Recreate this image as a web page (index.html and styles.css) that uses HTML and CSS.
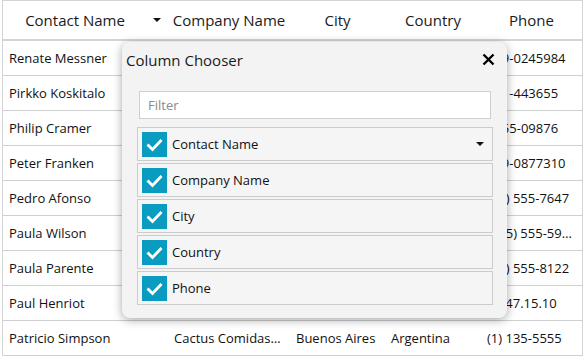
FILE: index.html
```html
<!DOCTYPE html>
<html>
  <head>
    <link rel="stylesheet" href="styles.css">
  </head>

  <body>
    <div class="grid">
      <div class="row header">
        <div class="cell head first">
          <span class="head-text">Contact Name</span>
          <span class="arrow"></span>
        </div>
        <div class="cell head">Company Name</div>
        <div class="cell head">City</div>
        <div class="cell head">Country</div>
        <div class="cell head">Phone</div>
      </div>
      <div class="row">
        <div class="cell">Renate Messner</div>
        <div class="cell">Lehmanns Marktstand</div>
        <div class="cell">Frankfurt a.M.</div>
        <div class="cell">Germany</div>
        <div class="cell">069-0245984</div>
      </div>
      <div class="row">
        <div class="cell">Pirkko Koskitalo</div>
        <div class="cell">Wartian Herkku</div>
        <div class="cell">Oulu</div>
        <div class="cell">Finland</div>
        <div class="cell">981-443655</div>
      </div>
      <div class="row">
        <div class="cell">Philip Cramer</div>
        <div class="cell">Königlich Essen</div>
        <div class="cell">Brandenburg</div>
        <div class="cell">Germany</div>
        <div class="cell">0555-09876</div>
      </div>
      <div class="row">
        <div class="cell">Peter Franken</div>
        <div class="cell">Frankenversand</div>
        <div class="cell">München</div>
        <div class="cell">Germany</div>
        <div class="cell">089-0877310</div>
      </div>
      <div class="row">
        <div class="cell">Pedro Afonso</div>
        <div class="cell">Comércio Mineiro</div>
        <div class="cell">Sao Paulo</div>
        <div class="cell">Brazil</div>
        <div class="cell">(11) 555-7647</div>
      </div>
      <div class="row">
        <div class="cell">Paula Wilson</div>
        <div class="cell">Rattlesnake Canyon Grocery</div>
        <div class="cell">Albuquerque</div>
        <div class="cell">USA</div>
        <div class="cell">(505) 555-5939</div>
      </div>
      <div class="row">
        <div class="cell">Paula Parente</div>
        <div class="cell">Wellington Importadora</div>
        <div class="cell">Resende</div>
        <div class="cell">Brazil</div>
        <div class="cell">(14) 555-8122</div>
      </div>
      <div class="row">
        <div class="cell">Paul Henriot</div>
        <div class="cell">Vins et alcools Chevalier</div>
        <div class="cell">Reims</div>
        <div class="cell">France</div>
        <div class="cell">26.47.15.10</div>
      </div>
      <div class="row">
        <div class="cell">Patricio Simpson</div>
        <div class="cell">Cactus Comidas para llevar</div>
        <div class="cell">Buenos Aires</div>
        <div class="cell">Argentina</div>
        <div class="cell">(1) 135-5555</div>
      </div>
    </div>

    <div class="chooser">
      <div class="chooser-title">
        <span>Column Chooser</span>
        <svg class="close" width="13" height="13" viewBox="0 0 13 13">
          <path d="M1.5 1.5 L11.5 11.5 M11.5 1.5 L1.5 11.5" stroke="#000" stroke-width="2.4" fill="none"/>
        </svg>
      </div>
      <div class="filter">Filter</div>
      <div class="items">
        <div class="item">
          <span class="check"><svg width="25" height="25" viewBox="0 0 25 25"><path d="M5.5 12.5 L10.5 17.5 L19.5 8" stroke="#fff" stroke-width="2.8" fill="none"/></svg></span>
          <span class="label">Contact Name</span>
          <span class="arrow"></span>
        </div>
        <div class="item">
          <span class="check"><svg width="25" height="25" viewBox="0 0 25 25"><path d="M5.5 12.5 L10.5 17.5 L19.5 8" stroke="#fff" stroke-width="2.8" fill="none"/></svg></span>
          <span class="label">Company Name</span>
        </div>
        <div class="item">
          <span class="check"><svg width="25" height="25" viewBox="0 0 25 25"><path d="M5.5 12.5 L10.5 17.5 L19.5 8" stroke="#fff" stroke-width="2.8" fill="none"/></svg></span>
          <span class="label">City</span>
        </div>
        <div class="item">
          <span class="check"><svg width="25" height="25" viewBox="0 0 25 25"><path d="M5.5 12.5 L10.5 17.5 L19.5 8" stroke="#fff" stroke-width="2.8" fill="none"/></svg></span>
          <span class="label">Country</span>
        </div>
        <div class="item">
          <span class="check"><svg width="25" height="25" viewBox="0 0 25 25"><path d="M5.5 12.5 L10.5 17.5 L19.5 8" stroke="#fff" stroke-width="2.8" fill="none"/></svg></span>
          <span class="label">Phone</span>
        </div>
      </div>
    </div>
  </body>
</html>
```

FILE: styles.css
```css
body {
  margin: 0;
  background-color: #fff;
  font-family: "Open Sans", "Noto Sans", sans-serif;
  color: #111;
}

.grid {
  margin-left: 2px;
  width: 579px;
  border-left: 1px solid #d4d4d4;
  border-right: 1px solid #d4d4d4;
  border-top: 1px solid #d4d4d4;
}

.row {
  display: grid;
  grid-template-columns: 165px 122px 95px 96px 1fr;
  height: 35px;
  box-sizing: border-box;
  border-bottom: 1px solid #d0d0d0;
  align-items: center;
}

.row.header {
  height: 40px;
  border-bottom: 2px solid #d4d4d4;
}

.cell {
  padding: 0 6px;
  font-size: 13px;
  white-space: nowrap;
  overflow: hidden;
  text-overflow: ellipsis;
}

.cell.head {
  padding: 0;
  overflow: visible;
  text-align: center;
  font-size: 15px;
  color: #1a1a1a;
}

.cell.first {
  display: flex;
  align-items: center;
}

.head-text {
  flex: 1;
  text-align: center;
}

.cell.first .arrow {
  margin: 0 7px 0 6px;
}

.arrow {
  width: 0;
  height: 0;
  border-left: 4px solid transparent;
  border-right: 4px solid transparent;
  border-top: 4px solid #111;
}

.chooser {
  position: absolute;
  left: 122px;
  top: 42px;
  width: 385px;
  height: 276px;
  box-sizing: border-box;
  background-color: #f3f3f3;
  border-radius: 8px;
  box-shadow: 0 2px 10px rgba(0, 0, 0, 0.35);
  padding: 0 14px 0 15px;
}

.chooser-title {
  display: flex;
  justify-content: space-between;
  align-items: center;
  height: 35px;
  margin-left: -11px;
  margin-right: -2px;
  font-size: 15px;
  color: #1a1a1a;
}

.filter {
  margin: 14px 2px 8px 2px;
  height: 28px;
  box-sizing: border-box;
  background-color: #fff;
  border: 1px solid #cfcfcf;
  padding-left: 8px;
  line-height: 26px;
  font-size: 13px;
  color: #8a8a8a;
}

.items {
  display: flex;
  flex-direction: column;
  gap: 2px;
}

.item {
  display: flex;
  align-items: center;
  height: 34px;
  box-sizing: border-box;
  border: 1px solid #cccccc;
  background-color: #f5f5f5;
  padding: 0 8px 0 4px;
}

.check {
  width: 25px;
  height: 25px;
  background-color: #0a9bc1;
}

.check svg {
  display: block;
}

.label {
  flex: 1;
  margin-left: 5px;
  font-size: 13px;
  color: #111;
}
```
